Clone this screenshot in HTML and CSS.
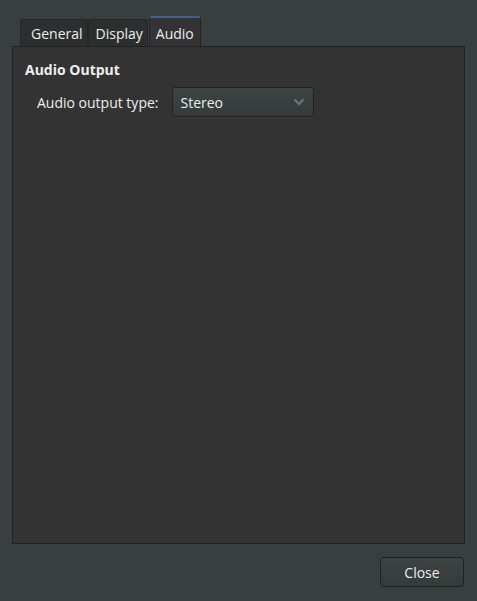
FILE: index.html
```html
<!DOCTYPE html>
<html>
<head>
<meta charset="utf-8">
<link rel="stylesheet" href="styles.css">
</head>
<body>
<div class="window">
  <div class="tabs">
    <div class="tab t-general">General</div>
    <div class="tab t-display">Display</div>
    <div class="tab active">Audio</div>
  </div>
  <div class="panel">
    <div class="heading">Audio Output</div>
    <div class="row">
      <span class="label">Audio output type:</span>
      <div class="combo">
        <span>Stereo</span>
        <svg width="12" height="8" viewBox="0 0 12 8"><path d="M1.5 1.5 L6 6 L10.5 1.5" fill="none" stroke="#6f7575" stroke-width="2"/></svg>
      </div>
    </div>
  </div>
  <div class="actions">
    <button class="btn">Close</button>
  </div>
</div>
</body>
</html>
```
FILE: styles.css
```css
html, body {
  margin: 0;
  padding: 0;
  background: #393f3f;
  width: 477px;
  height: 601px;
  overflow: hidden;
  font-family: "Open Sans", "DejaVu Sans", sans-serif;
  font-size: 14px;
  color: #eeeeec;
}
.window {
  padding: 16px 12px 0 12px;
  display: flex;
  flex-direction: column;
}
.tabs {
  display: flex;
  align-items: flex-end;
  padding-left: 8px;
  height: 30px;
}
.tab {
  height: 26px;
  line-height: 27px;
  background: #2c2f2f;
  border: 1px solid #232626;
  border-bottom: none;
  border-radius: 3px 3px 0 0;
  color: #eeeeec;
}
.t-general { padding: 0 4px 0 10px; }
.t-display { padding: 0 4px 0 7px; }
.tab.active {
  height: 28px;
  line-height: 31px;
  background: #333333;
  border-top: 2px solid #3e5f8f;
  padding: 0 6px 0 6px;
  margin-left: 1px;
}
.panel {
  height: 498px;
  box-sizing: border-box;
  background: #333333;
  border: 1px solid #1f2222;
  padding: 13px 12px 0 12px;
}
.heading {
  font-weight: bold;
  line-height: 20px;
}
.row {
  display: flex;
  align-items: center;
  margin-top: 7px;
  padding-left: 12px;
}
.label {
  margin-right: 14px;
}
.combo {
  width: 142px;
  height: 30px;
  box-sizing: border-box;
  border: 1px solid #1f2222;
  border-radius: 3px;
  background: linear-gradient(#3d4444, #353a3a);
  display: flex;
  align-items: center;
  justify-content: space-between;
  padding: 0 8px 0 7px;
  box-shadow: 0 1px 0 rgba(255,255,255,0.03);
}
.actions {
  display: flex;
  justify-content: flex-end;
  margin-top: 13px;
}
.btn {
  width: 84px;
  height: 30px;
  font: inherit;
  color: #eeeeec;
  background: linear-gradient(#3d4444, #353a3a);
  border: 1px solid #1f2222;
  border-radius: 3px;
  margin-right: 1px;
  padding: 0;
}
```
